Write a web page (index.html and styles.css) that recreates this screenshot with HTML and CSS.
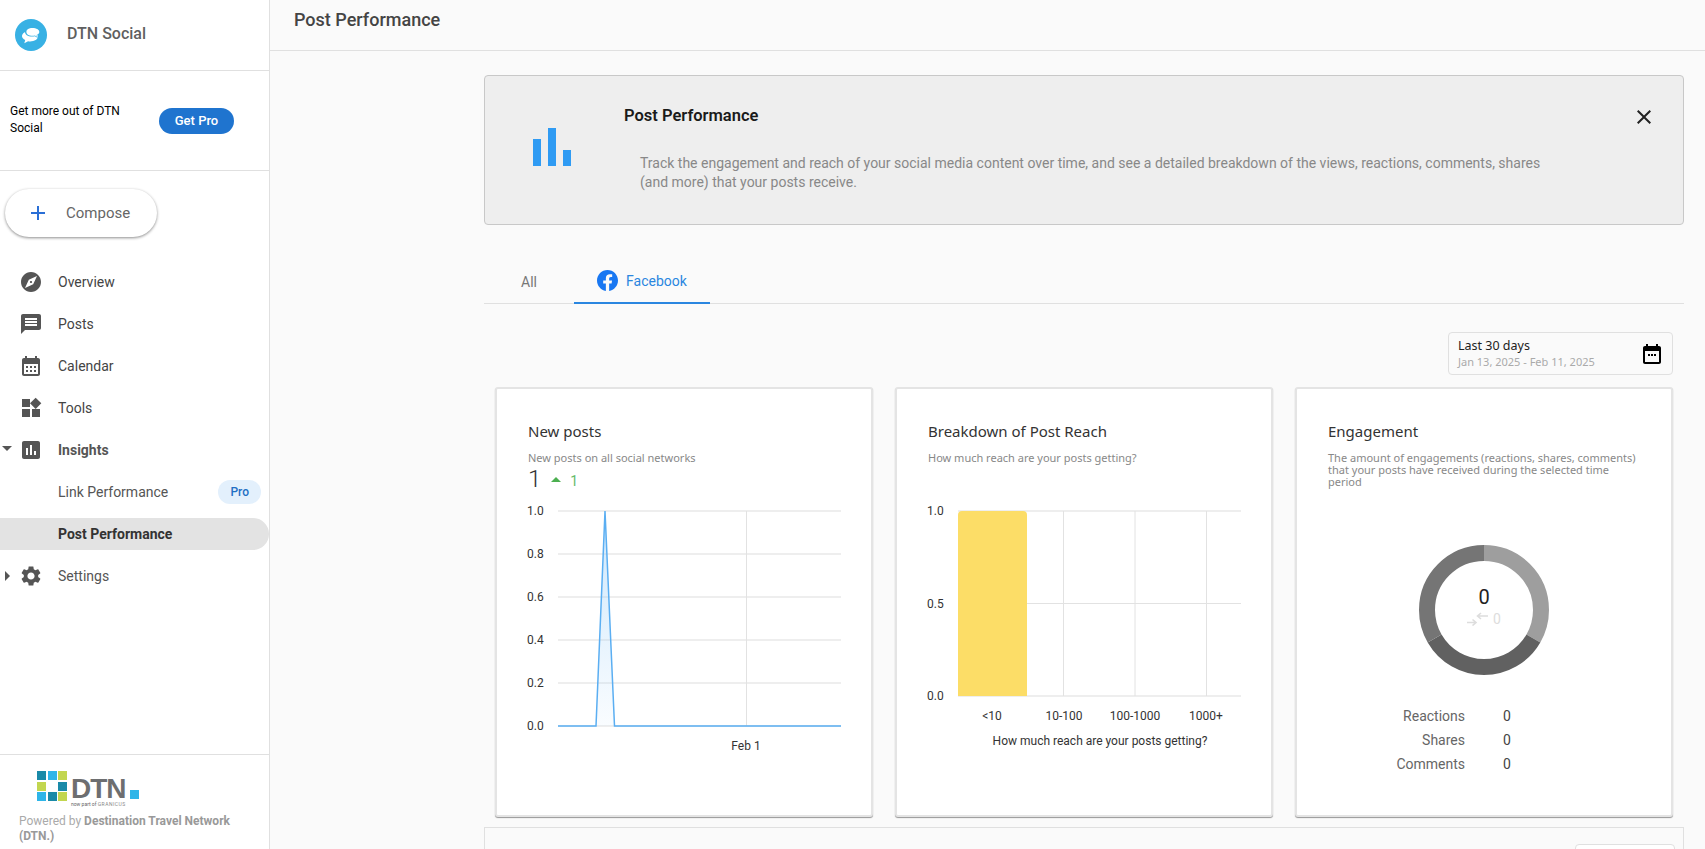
FILE: index.html
```html
<!DOCTYPE html>
<html lang="en">
<head>
  <meta charset="UTF-8">
  <meta name="viewport" content="width=device-width, initial-scale=1.0">
  <title>Post Performance - DTN Social</title>
  <link rel="stylesheet" href="styles.css">
</head>
<body>

  <div class="app">

    <aside class="sidebar">
      <div class="brand">
        <svg class="brand-logo" viewBox="0 0 32 32">
          <circle cx="16" cy="16" r="16" fill="#38b1e4"/>
          <path d="M13 9c4.600 0 8 2.300 8 5.300s-3.400 5.200-8 5.200c-.7 0-1.300 0-1.900-.2l-3.800 2 .9-3.300c-1.900-1-3.200-2.300-3.200-3.800C5 11.300 8.400 9 13 9z" fill="#fff" transform="translate(2 3)"/>
          <path d="M17 8c4.400 0 8 2.100 8 4.800 0 1.500-1.100 2.800-2.900 3.700l.7 2.500-3-1.700c-.9.200-1.800.3-2.800.3-4.400 0-7-2-7-4.800S12.600 8 17 8z" fill="#38b1e4"/>
          <path d="M17.500 9c3.800 0 6.800 1.700 6.800 3.900 0 1.300-1.100 2.400-2.700 3.100l.5 1.700-2.200-1.300c-.8.200-1.600.3-2.400.3-3.800 0-6.100-1.600-6.100-3.800S13.700 9 17.500 9z" fill="#fff"/>
        </svg>
        <span class="brand-name">DTN Social</span>
      </div>

      <div class="promo">
        <p class="promo-text">Get more out of DTN Social</p>
        <button class="get-pro">Get Pro</button>
      </div>

      <button class="compose">
        <svg viewBox="0 0 16 16" width="16" height="16"><path d="M7 1h2v6h6v2H9v6H7V9H1V7h6z" fill="#2a6fd6"/></svg>
        <span>Compose</span>
      </button>

      <nav class="nav">
        <a class="nav-item">
          <span class="caret"></span>
          <svg class="nav-icon" viewBox="0 0 24 24"><path d="M12 10.900c-.61 0-1.100.49-1.100 1.100s.49 1.100 1.100 1.100c.61 0 1.100-.49 1.100-1.100s-.49-1.100-1.100-1.100zM12 2C6.480 2 2 6.480 2 12s4.480 10 10 10 10-4.480 10-10S17.520 2 12 2zm2.190 12.190L6 18l3.810-8.190L18 6l-3.810 8.190z"/></svg>
          <span>Overview</span>
        </a>
        <a class="nav-item">
          <span class="caret"></span>
          <svg class="nav-icon" viewBox="0 0 24 24"><path d="M20 2H4c-1.100 0-2 .9-2 2v18l4-4h14c1.100 0 2-.9 2-2V4c0-1.100-.9-2-2-2zM18 14H6v-2h12v2zm0-3H6V9h12v2zm0-3H6V6h12v2z"/></svg>
          <span>Posts</span>
        </a>
        <a class="nav-item">
          <span class="caret"></span>
          <svg class="nav-icon" viewBox="0 0 24 24"><path d="M19 4h-1V2h-2v2H8V2H6v2H5c-1.110 0-1.990.9-1.990 2L3 20c0 1.100.89 2 2 2h14c1.100 0 2-.9 2-2V6c0-1.100-.9-2-2-2zm0 16H5V10h14v10zM9 14H7v-2h2v2zm4 0h-2v-2h2v2zm4 0h-2v-2h2v2zm-8 4H7v-2h2v2zm4 0h-2v-2h2v2zm4 0h-2v-2h2v2z"/></svg>
          <span>Calendar</span>
        </a>
        <a class="nav-item">
          <span class="caret"></span>
          <svg class="nav-icon" viewBox="0 0 24 24"><path d="M13 13v8h8v-8h-8zM3 21h8v-8H3v8zM3 3v8h8V3H3zm13.660-1.310L11 7.340 16.660 13l5.660-5.660-5.660-5.650z"/></svg>
          <span>Tools</span>
        </a>
        <a class="nav-item nav-bold">
          <span class="caret caret-down"></span>
          <svg class="nav-icon" viewBox="0 0 24 24"><path d="M19 3H5c-1.100 0-2 .9-2 2v14c0 1.100.9 2 2 2h14c1.100 0 2-.9 2-2V5c0-1.100-.9-2-2-2zM9 17H7v-7h2v7zm4 0h-2V7h2v10zm4 0h-2v-4h2v4z"/></svg>
          <span>Insights</span>
        </a>
        <a class="nav-item nav-sub">
          <span>Link Performance</span>
          <span class="pro-badge">Pro</span>
        </a>
        <a class="nav-item nav-sub nav-active">
          <span>Post Performance</span>
        </a>
        <a class="nav-item nav-muted">
          <span class="caret caret-right"></span>
          <svg class="nav-icon" viewBox="0 0 24 24"><path d="M19.140 12.940c.04-.3.06-.61.06-.94 0-.32-.02-.64-.07-.94l2.030-1.580c.18-.14.23-.41.12-.61l-1.920-3.320c-.12-.22-.37-.29-.59-.22l-2.390.96c-.5-.38-1.030-.7-1.620-.94l-.36-2.540c-.04-.24-.24-.41-.48-.41h-3.840c-.24 0-.43.17-.47.41l-.36 2.540c-.59.24-1.130.57-1.620.94l-2.390-.96c-.22-.08-.47 0-.59.22L2.740 8.870c-.12.21-.08.47.12.61l2.030 1.580c-.05.3-.09.63-.09.94s.02.64.07.94l-2.030 1.580c-.18.14-.23.41-.12.61l1.920 3.320c.12.22.37.29.59.22l2.390-.96c.5.38 1.030.7 1.620.94l.36 2.540c.05.24.24.41.48.41h3.840c.24 0 .44-.17.47-.41l.36-2.540c.59-.24 1.130-.56 1.620-.94l2.390.96c.22.08.47 0 .59-.22l1.920-3.320c.12-.22.07-.47-.12-.61l-2.010-1.580zM12 15.600c-1.980 0-3.600-1.620-3.600-3.600s1.620-3.600 3.600-3.600 3.600 1.620 3.600 3.600-1.620 3.600-3.600 3.600z"/></svg>
          <span>Settings</span>
        </a>
      </nav>

      <div class="side-footer">
        <div class="dtn-logo">
          <div class="dtn-squares">
            <i class="sq-teal"></i><i class="sq-sky"></i><i class="sq-lime"></i>
            <i class="sq-lime"></i><i></i><i class="sq-teal"></i>
            <i class="sq-sky"></i><i class="sq-teal"></i><i class="sq-lime"></i>
          </div>
          <div class="dtn-mark">
            <div class="dtn-word">DTN<i class="dtn-dot"></i></div>
            <div class="dtn-tag">now part of <b>GRANICUS</b></div>
          </div>
        </div>
        <p class="powered">Powered by <b>Destination Travel Network (DTN.)</b></p>
      </div>
    </aside>

    <main class="main">
      <header class="topbar">
        <h1>Post Performance</h1>
      </header>

      <div class="content">
        <section class="banner">
          <svg class="banner-icon" viewBox="0 0 38 38" width="38" height="38">
            <rect x="0" y="11" width="8" height="27" fill="#2f9bf3"/>
            <rect x="15" y="0" width="8" height="38" fill="#2f9bf3"/>
            <rect x="30" y="22" width="8" height="16" fill="#2f9bf3"/>
          </svg>
          <div class="banner-body">
            <h2>Post Performance</h2>
            <p>Track the engagement and reach of your social media content over time, and see a detailed breakdown of the views, reactions, comments, shares (and more) that your posts receive.</p>
          </div>
          <svg class="banner-close" viewBox="0 0 24 24" width="24" height="24"><path d="M19 6.410L17.590 5 12 10.590 6.410 5 5 6.410 10.590 12 5 17.590 6.410 19 12 13.410 17.590 19 19 17.590 13.410 12z"/></svg>
        </section>

        <div class="tabs">
          <a class="tab">All</a>
          <a class="tab tab-active">
            <svg viewBox="0 0 24 24" width="21" height="21"><path d="M24 12.073c0-6.627-5.373-12-12-12s-12 5.373-12 12c0 5.990 4.388 10.954 10.125 11.854v-8.385H7.078v-3.470h3.047V9.430c0-3.007 1.792-4.669 4.533-4.669 1.312 0 2.686.235 2.686.235v2.953H15.830c-1.491 0-1.956.925-1.956 1.874v2.250h3.328l-.532 3.470h-2.796v8.385C19.612 23.027 24 18.062 24 12.073z" fill="#1877f2"/></svg>
            <span>Facebook</span>
          </a>
        </div>

        <div class="date-row">
          <div class="date-box">
            <div>
              <div class="date-label">Last 30 days</div>
              <div class="date-range">Jan 13, 2025 - Feb 11, 2025</div>
            </div>
            <svg viewBox="0 0 24 24" width="24" height="24"><path d="M19 4h-1V2h-2v2H8V2H6v2H5c-1.110 0-2 .9-2 2v14c0 1.100.89 2 2 2h14c1.100 0 2-.9 2-2V6c0-1.100-.9-2-2-2zm0 16H5V9h14v11zM8 12h2v2H8v-2zm3 0h2v2h-2v-2zm3 0h2v2h-2v-2z"/></svg>
          </div>
        </div>

        <div class="cards">

          <section class="card">
            <div class="card-head">
              <h3>New posts</h3>
              <p class="card-sub">New posts on all social networks</p>
              <div class="stat">
                <span class="stat-num">1</span>
                <span class="stat-up"></span>
                <span class="stat-delta">1</span>
              </div>
            </div>
            <svg class="chart" viewBox="0 0 330 270" width="330" height="270">
              <defs>
                <linearGradient id="areaFill" x1="0" y1="0" x2="0" y2="1">
                  <stop offset="0" stop-color="#90caf9" stop-opacity=".45"/>
                  <stop offset="1" stop-color="#90caf9" stop-opacity=".05"/>
                </linearGradient>
              </defs>
              <g class="grid-h">
                <line x1="38" x2="321" y1="11" y2="11"/>
                <line x1="38" x2="321" y1="54" y2="54"/>
                <line x1="38" x2="321" y1="97" y2="97"/>
                <line x1="38" x2="321" y1="140" y2="140"/>
                <line x1="38" x2="321" y1="183" y2="183"/>
                <line x1="38" x2="321" y1="226" y2="226"/>
              </g>
              <line class="grid-v" x1="226.500" x2="226.500" y1="11" y2="226"/>
              <path d="M76 226L85 11L94.500 226z" fill="url(#areaFill)"/>
              <path class="data-line" d="M38 226H76L85 11L94.500 226H321"/>
              <g class="axis">
                <text x="7" y="15">1.0</text>
                <text x="7" y="58">0.8</text>
                <text x="7" y="101">0.6</text>
                <text x="7" y="144">0.4</text>
                <text x="7" y="187">0.2</text>
                <text x="7" y="230">0.0</text>
                <text x="226" y="250" text-anchor="middle">Feb 1</text>
              </g>
            </svg>
          </section>

          <section class="card">
            <div class="card-head">
              <h3>Breakdown of Post Reach</h3>
              <p class="card-sub">How much reach are your posts getting?</p>
            </div>
            <svg class="chart" viewBox="0 0 330 270" width="330" height="270">
              <g class="grid-h">
                <line x1="38" x2="321" y1="11" y2="11"/>
                <line x1="38" x2="321" y1="196" y2="196"/>
              </g>
              <g class="grid-v">
                <line x1="38" x2="321" y1="103.500" y2="103.500"/>
                <line x1="143.500" x2="143.500" y1="11" y2="196"/>
                <line x1="215" x2="215" y1="11" y2="196"/>
                <line x1="286.500" x2="286.500" y1="11" y2="196"/>
              </g>
              <path d="M38 196V15a4 4 0 0 1 4-4H103a4 4 0 0 1 4 4V196z" fill="#fcdd67"/>
              <g class="axis">
                <text x="7" y="15">1.0</text>
                <text x="7" y="107.500">0.5</text>
                <text x="7" y="200">0.0</text>
                <text x="72" y="220" text-anchor="middle">&lt;10</text>
                <text x="144" y="220" text-anchor="middle">10-100</text>
                <text x="215" y="220" text-anchor="middle">100-1000</text>
                <text x="286" y="220" text-anchor="middle">1000+</text>
                <text x="180" y="245" text-anchor="middle">How much reach are your posts getting?</text>
              </g>
            </svg>
          </section>

          <section class="card">
            <div class="card-head">
              <h3>Engagement</h3>
              <p class="card-sub">The amount of engagements (reactions, shares, comments) that your posts have received during the selected time period</p>
            </div>
            <div class="donut">
              <svg viewBox="0 0 130 130" width="130" height="130">
                <g class="donut-ring" transform="rotate(-90 65 65)">
                  <circle cx="65" cy="65" r="57" pathLength="360" stroke="#9e9e9e" stroke-dasharray="120 240"/>
                  <circle cx="65" cy="65" r="57" pathLength="360" stroke="#616161" stroke-dasharray="120 240" stroke-dashoffset="-120"/>
                  <circle cx="65" cy="65" r="57" pathLength="360" stroke="#757575" stroke-dasharray="120 240" stroke-dashoffset="-240"/>
                </g>
              </svg>
              <div class="donut-center">
                <div class="donut-num">0</div>
                <div class="donut-sub">
                  <svg viewBox="0 0 22 14" width="22" height="14">
                    <path d="M0 10.500h8M5.500 7.500l3.500 3-3.500 3" class="swap"/>
                    <path d="M21 4H11M14 1L10.500 4 14 7" class="swap"/>
                  </svg>
                  <span>0</span>
                </div>
              </div>
            </div>
            <dl class="eng-table">
              <dt>Reactions</dt><dd>0</dd>
              <dt>Shares</dt><dd>0</dd>
              <dt>Comments</dt><dd>0</dd>
            </dl>
          </section>

        </div>

        <section class="next-panel">
          <div class="next-button"></div>
        </section>
      </div>
    </main>

  </div>

</body>
</html>
```

FILE: styles.css
```css
html, body {
  margin: 0;
  padding: 0;
  height: 100%;
  overflow: hidden;
}

body {
  font-family: Roboto, "Liberation Sans", sans-serif;
  background: #fafafa;
  color: #333;
}

.app {
  display: flex;
  height: 849px;
  overflow: hidden;
}

/* Sidebar */
.sidebar {
  width: 269px;
  flex-shrink: 0;
  display: flex;
  flex-direction: column;
  background: white;
  border-right: 1px solid #e0e0e0;
}

.brand {
  display: flex;
  align-items: center;
  height: 70px;
  padding-left: 15px;
  border-bottom: 1px solid #e0e0e0;
  box-sizing: content-box;
}

.brand-logo {
  width: 32px;
  height: 32px;
  margin-right: 20px;
}

.brand-name {
  font-size: 16px;
  font-weight: 500;
  color: #5f5f5f;
  margin-top: -4px;
}

.promo {
  display: flex;
  align-items: center;
  height: 99px;
  padding-left: 10px;
  border-bottom: 1px solid #e0e0e0;
}

.promo-text {
  width: 130px;
  margin: -2px 19px 0 0;
  font-size: 12px;
  line-height: 17px;
  color: black;
}

.get-pro {
  width: 75px;
  height: 26px;
  padding: 0;
  border: none;
  border-radius: 13px;
  background: #1f74cf;
  color: white;
  font-family: inherit;
  font-size: 13px;
  font-weight: 500;
}

.compose {
  display: flex;
  align-items: center;
  width: 152px;
  height: 48px;
  margin: 18px 0 0 5px;
  padding: 0 0 0 25px;
  border: none;
  border-radius: 24px;
  background: white;
  box-shadow: 0 1px 3px rgba(0, 0, 0, 0.45);
  font-family: inherit;
  font-size: 15px;
  color: #666;
}

.compose span {
  margin-left: 20px;
}

.nav {
  display: flex;
  flex-direction: column;
  gap: 10px;
  margin-top: 29px;
}

.nav-item {
  display: flex;
  align-items: center;
  height: 32px;
  font-size: 14px;
  color: #444;
}

.caret {
  width: 19px;
  flex-shrink: 0;
  position: relative;
}

.caret-down::after {
  content: "";
  position: absolute;
  left: 2px;
  top: -4px;
  border-left: 5px solid transparent;
  border-right: 5px solid transparent;
  border-top: 5px solid #555;
}

.caret-right::after {
  content: "";
  position: absolute;
  left: 5px;
  top: -5px;
  border-top: 5px solid transparent;
  border-bottom: 5px solid transparent;
  border-left: 5px solid #555;
}

.nav-icon {
  width: 24px;
  height: 24px;
  margin-right: 15px;
  fill: #555;
  flex-shrink: 0;
}

.nav-bold {
  font-weight: 700;
  color: #555;
}

.nav-muted {
  color: #555;
}

.nav-sub {
  padding-left: 58px;
  color: #555;
}

.nav-active {
  margin-right: 0;
  background: #e3e3e3;
  border-radius: 0 16px 16px 0;
  font-weight: 700;
  color: #333;
}

.pro-badge {
  margin-left: 50px;
  width: 43px;
  height: 24px;
  line-height: 24px;
  text-align: center;
  border-radius: 12px;
  background: #e3f0fc;
  color: #1f6fc4;
  font-size: 12px;
  font-weight: 500;
}

.side-footer {
  margin-top: auto;
  height: 95px;
  border-top: 1px solid #e0e0e0;
  padding: 16px 0 0 19px;
  box-sizing: border-box;
}

.dtn-logo {
  display: flex;
  margin-left: 18px;
}

.dtn-squares {
  display: grid;
  grid-template-columns: repeat(3, 9px);
  grid-auto-rows: 9px;
  gap: 1.500px;
  margin-right: 4px;
}

.sq-teal { background: #1a8aa8; }
.sq-sky { background: #2eb5e8; }
.sq-lime { background: #c2d64f; }

.dtn-mark {
  padding-top: 6px;
}

.dtn-word {
  display: flex;
  align-items: flex-end;
  height: 24px;
  font-family: "Liberation Sans", sans-serif;
  font-size: 28px;
  line-height: 24px;
  font-weight: 700;
  letter-spacing: -1px;
  color: #6d6e70;
}

.dtn-dot {
  width: 9px;
  height: 9px;
  margin: 0 0 2px 4px;
  background: #2eb5e8;
}

.dtn-tag {
  font-size: 5px;
  line-height: 7px;
  color: #666;
  white-space: nowrap;
}

.dtn-tag b {
  font-weight: 400;
  letter-spacing: 0.5px;
  color: #888;
}

.powered {
  margin: 6px 0 0;
  width: 215px;
  font-size: 12px;
  line-height: 15px;
  color: #aaa;
}

.powered b {
  font-weight: 700;
  color: #999;
}

/* Main column */
.main {
  flex: 1;
  min-width: 0;
}

.topbar {
  height: 50px;
  border-bottom: 1px solid #e0e0e0;
  padding-left: 24px;
}

.topbar h1 {
  margin: 0;
  font-size: 18px;
  font-weight: 500;
  line-height: 40px;
  color: #444;
}

.content {
  padding: 24px 21px 0 214px;
}

.banner {
  display: flex;
  height: 150px;
  box-sizing: border-box;
  background: #eeeeee;
  border: 1px solid #c8c8c8;
  border-radius: 4px;
  position: relative;
}

.banner-icon {
  flex-shrink: 0;
  margin: 52px 0 0 48px;
}

.banner-body {
  padding: 30px 0 0 53px;
}

.banner-body h2 {
  margin: 0;
  font-size: 16.500px;
  font-weight: 600;
  line-height: 20px;
  color: #1a1a1a;
}

.banner-body p {
  width: 930px;
  margin: 28px 0 0 16px;
  font-size: 14px;
  line-height: 19px;
  color: #888;
}

.banner-close {
  position: absolute;
  right: 27px;
  top: 29px;
  fill: #222;
}

.tabs {
  display: flex;
  height: 79px;
  box-sizing: border-box;
  padding: 34px 0 0;
  border-bottom: 1px solid #e0e0e0;
}

.tab {
  display: flex;
  align-items: center;
  justify-content: center;
  gap: 8px;
  width: 90px;
  height: 45px;
  font-size: 14px;
  color: #777;
}

.tab-active {
  width: 136px;
  color: #2a86e0;
  border-bottom: 2px solid #2a86e0;
  box-sizing: border-box;
  padding-top: 0;
}

.date-row {
  display: flex;
  justify-content: flex-end;
  margin-top: 28px;
  padding-right: 11px;
}

.date-box {
  display: flex;
  justify-content: space-between;
  align-items: center;
  width: 225px;
  height: 43px;
  box-sizing: border-box;
  padding: 0 8px 0 9px;
  border: 1px solid #e0e0e0;
  border-radius: 4px;
}

.date-label {
  font-family: "Noto Sans", sans-serif;
  font-size: 12.500px;
  line-height: 16px;
  color: #222;
}

.date-range {
  font-family: "Noto Sans", sans-serif;
  font-size: 11px;
  line-height: 16px;
  color: #aaa;
}

.cards {
  display: grid;
  grid-template-columns: repeat(3, 378px);
  gap: 22px;
  margin-top: 12px;
  padding-left: 11px;
}

.card {
  height: 430px;
  box-sizing: border-box;
  background: white;
  border: 2px solid #e4e4e4;
  border-radius: 3px;
  box-shadow: 0 1px 1px rgba(0, 0, 0, 0.4);
}

.card-head {
  height: 111px;
  box-sizing: border-box;
  padding: 32px 30px 0 31px;
}

.card-head h3 {
  margin: 0;
  font-family: "Noto Sans", sans-serif;
  font-size: 15px;
  font-weight: 400;
  line-height: 20px;
  color: #333;
}

.card-sub {
  margin: 11px 0 0;
  font-family: "Noto Sans", sans-serif;
  font-size: 11px;
  line-height: 12px;
  color: #888;
}

.stat {
  display: flex;
  align-items: center;
  height: 24px;
  margin-top: 3px;
}

.stat-num {
  font-size: 24px;
  font-weight: 300;
  color: #333;
}

.stat-up {
  width: 0;
  height: 0;
  margin: 0 9px 0 10px;
  border-left: 5px solid transparent;
  border-right: 5px solid transparent;
  border-bottom: 5px solid #4caf50;
}

.stat-delta {
  font-size: 14px;
  color: #66bb6a;
  margin-top: 4px;
}

.chart {
  display: block;
  margin-left: 23px;
}

.grid-h line {
  stroke: #eeeeee;
  stroke-width: 2;
}

.grid-v,
.grid-v line {
  stroke: #e2e2e2;
  stroke-width: 1;
}

.data-line {
  fill: none;
  stroke: #5aaef2;
  stroke-width: 1.500;
}

.axis text {
  font-family: Roboto, sans-serif;
  font-size: 12px;
  fill: #333;
}

.donut {
  position: relative;
  width: 130px;
  height: 130px;
  margin: 45px auto 0;
}

.donut svg {
  display: block;
}

.donut-ring circle {
  fill: none;
  stroke-width: 16;
}

.donut-center {
  position: absolute;
  left: 0;
  right: 0;
  top: 40px;
  text-align: center;
}

.donut-num {
  font-size: 20px;
  line-height: 24px;
  color: #222;
}

.donut-sub {
  display: flex;
  justify-content: center;
  align-items: center;
  gap: 4px;
  margin-top: 1px;
  font-size: 14px;
  line-height: 18px;
  color: #ddd;
}

.swap {
  fill: none;
  stroke: #ddd;
  stroke-width: 1.600;
}

.eng-table {
  display: grid;
  grid-template-columns: 168px 1fr;
  column-gap: 38px;
  grid-auto-rows: 24px;
  margin: 29px 0 0;
  font-size: 14px;
  line-height: 24px;
}

.eng-table dt {
  text-align: right;
  color: #666;
}

.eng-table dd {
  margin: 0;
  color: #444;
}

.next-panel {
  height: 100px;
  margin-top: 10px;
  box-sizing: border-box;
  padding: 16px 8px 0 0;
  border: 1px solid #e0e0e0;
  display: flex;
  justify-content: flex-end;
}

.next-button {
  width: 98px;
  height: 40px;
  background: white;
  border: 1px solid #e0e0e0;
  border-radius: 4px;
}
```
